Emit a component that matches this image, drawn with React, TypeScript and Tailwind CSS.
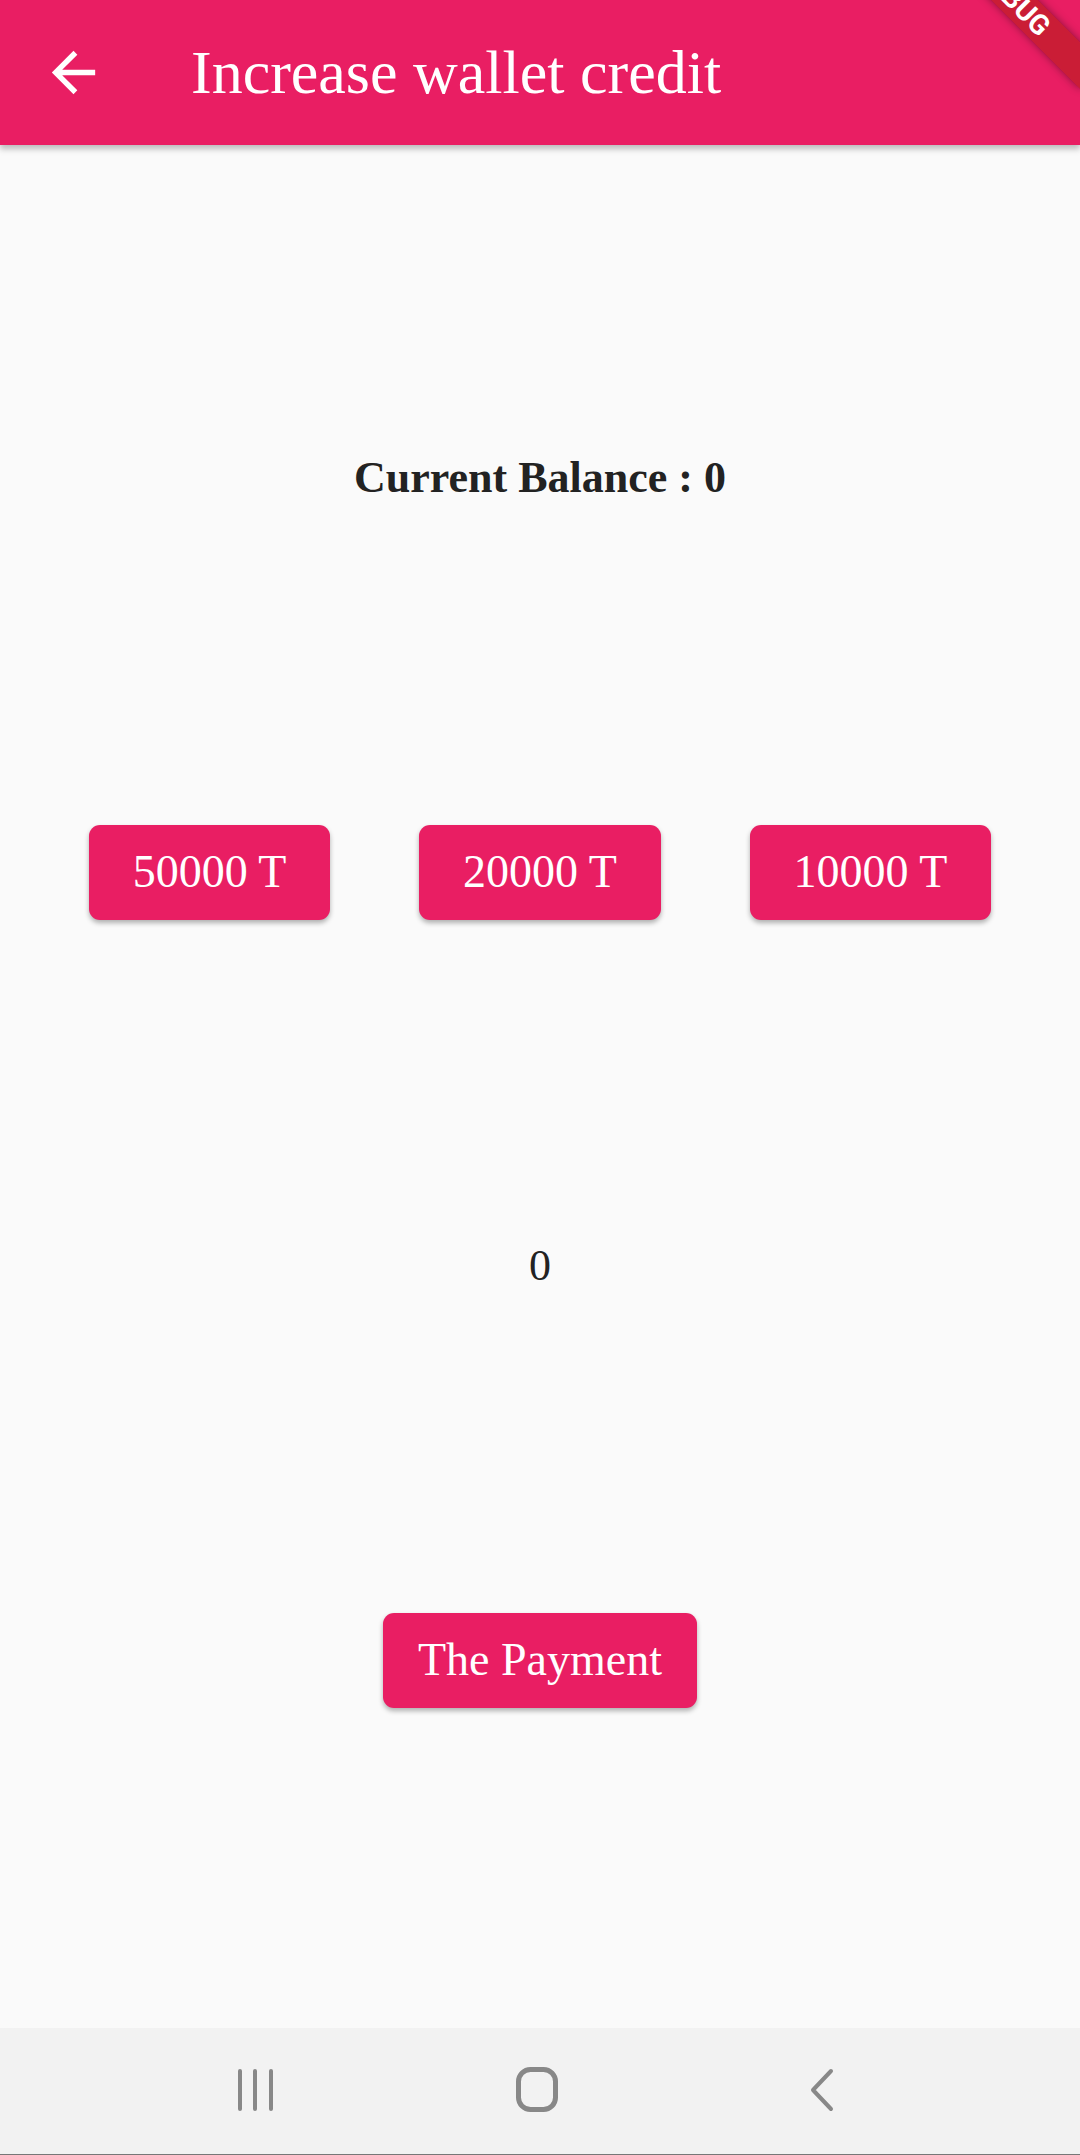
import React from "react";

const serif = { fontFamily: '"Liberation Serif", "DejaVu Serif", serif' };

function PinkButton({ label, wide }: { label: string; wide?: boolean }) {
  return (
    <button
      className={
        "h-[95px] rounded-[11px] bg-[#e91e63] text-white text-[46px] leading-none shadow-[0_3px_5px_rgba(0,0,0,0.3)] " +
        (wide ? "px-[35px]" : "px-[44px]")
      }
      style={serif}
    >
      {label}
    </button>
  );
}

export default function App() {
  return (
    <div className="w-[1080px] h-[2155px] flex flex-col bg-[#fafafa] overflow-hidden" style={serif}>
      {/* app bar */}
      <div className="relative h-[145px] shrink-0 bg-[#e91e63] flex items-center shadow-[0_4px_6px_rgba(0,0,0,0.25)] overflow-hidden z-10">
        <svg className="ml-[41px] w-[65px] h-[65px]" viewBox="0 0 24 24" fill="white">
          <path d="M20 11H7.83l5.59-5.59L12 4l-8 8 8 8 1.41-1.41L7.83 13H20v-2z" />
        </svg>
        <span className="ml-[85px] text-white text-[62px] leading-none -mt-[2px]">Increase wallet credit</span>
        <div className="absolute left-[904px] top-[-17px] w-[220px] h-[33px] rotate-45 bg-[rgba(183,28,28,0.63)] flex items-center justify-center shadow-[0_0_8px_rgba(0,0,0,0.4)]">
          <span className="text-white font-bold text-[28px] leading-none" style={{ fontFamily: '"Roboto", "Liberation Sans", sans-serif' }}>
            DEBUG
          </span>
        </div>
      </div>

      {/* body */}
      <div className="flex-1 flex flex-col pt-[136px]">
        <div className="h-[394px] flex items-center justify-center">
          <span className="text-[44px] font-bold text-[#222] leading-none">Current Balance : 0</span>
        </div>
        <div className="h-[394px] flex items-center justify-evenly">
          <PinkButton label="50000 T" />
          <PinkButton label="20000 T" />
          <PinkButton label="10000 T" />
        </div>
        <div className="h-[394px] flex items-center justify-center">
          <span className="text-[44px] text-[#222] leading-none">0</span>
        </div>
        <div className="h-[394px] flex items-center justify-center">
          <PinkButton label="The Payment" wide />
        </div>
      </div>

      {/* system nav bar */}
      <div className="h-[127px] shrink-0 bg-[#f2f2f2] border-b border-[#777] flex items-center">
        <div className="w-full flex items-center -mt-[2px]">
          <svg className="ml-[236px] w-[42px] h-[44px]" viewBox="0 0 42 44" stroke="#888" strokeWidth="4" strokeLinecap="round">
            <path d="M4 3v38M19 3v38M35 3v38" />
          </svg>
          <svg className="ml-[236px] w-[46px] h-[48px]" viewBox="0 0 46 48" fill="none" stroke="#888" strokeWidth="5">
            <rect x="4.5" y="3.5" width="37" height="40" rx="12" />
          </svg>
          <svg className="ml-[246px] w-[30px] h-[44px]" viewBox="0 0 30 44" fill="none" stroke="#888" strokeWidth="4" strokeLinecap="round" strokeLinejoin="round">
            <path d="M25 3L7 22l18 19" />
          </svg>
        </div>
      </div>
    </div>
  );
}
